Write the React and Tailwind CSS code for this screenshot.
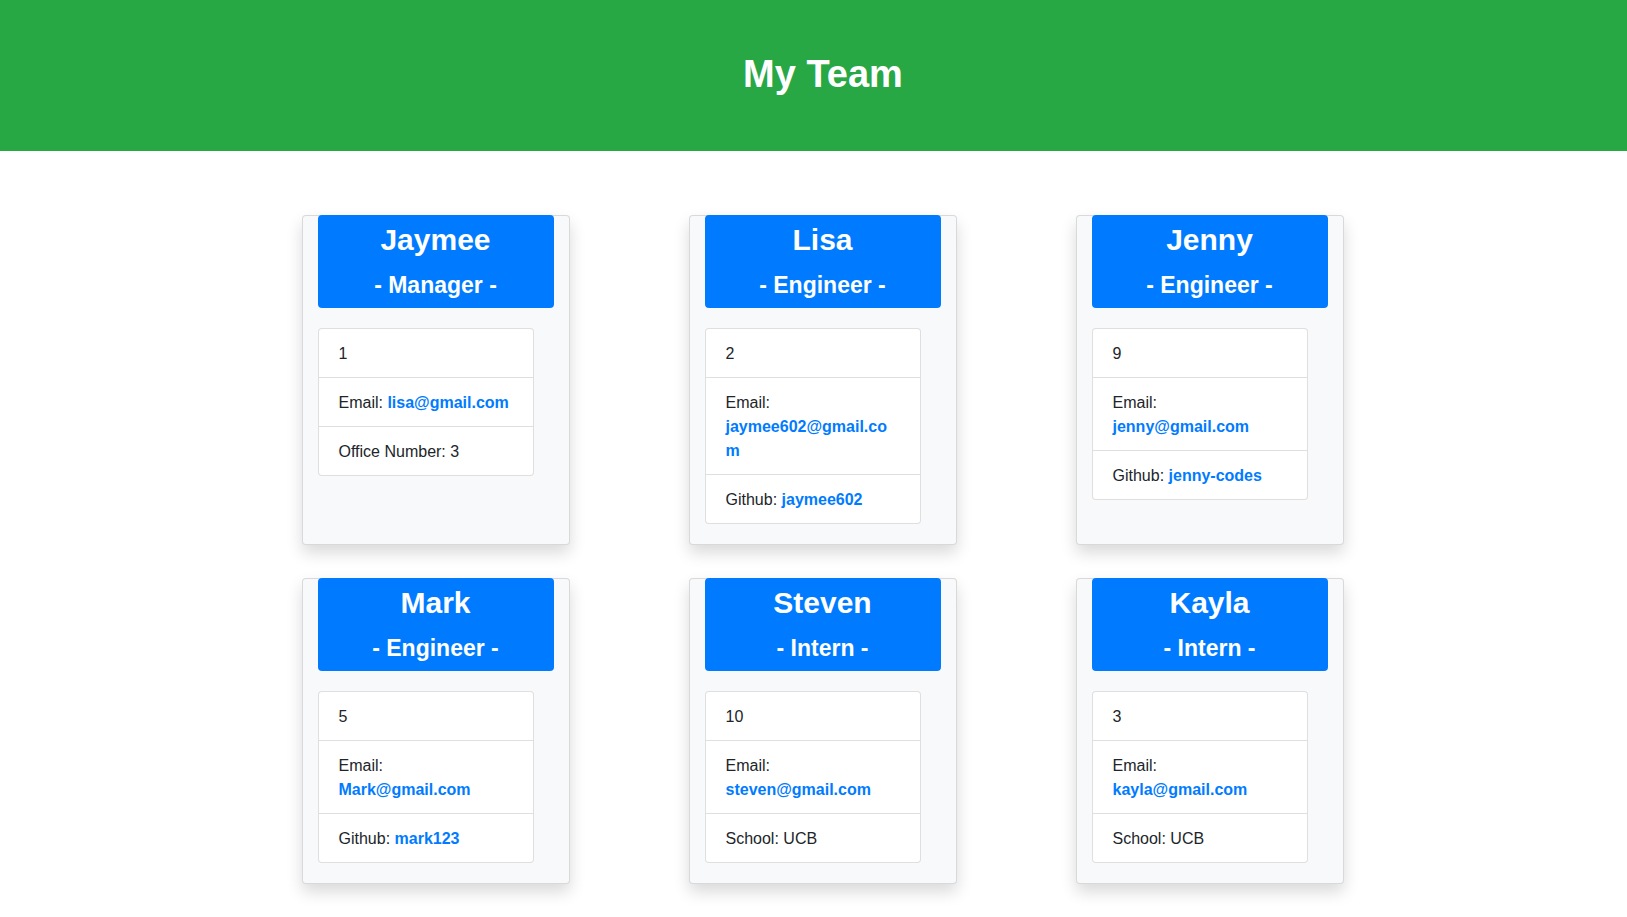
import React from 'react';

const team = [
    { name: 'Jaymee', role: 'Manager', id: 1, email: 'lisa@gmail.com', extra: { label: 'Office Number:', value: '3' } },
    { name: 'Lisa', role: 'Engineer', id: 2, email: 'jaymee602@gmail.com', extra: { label: 'Github:', value: 'jaymee602', link: true } },
    { name: 'Jenny', role: 'Engineer', id: 9, email: 'jenny@gmail.com', extra: { label: 'Github:', value: 'jenny-codes', link: true } },
    { name: 'Mark', role: 'Engineer', id: 5, email: 'Mark@gmail.com', extra: { label: 'Github:', value: 'mark123', link: true } },
    { name: 'Steven', role: 'Intern', id: 10, email: 'steven@gmail.com', extra: { label: 'School:', value: 'UCB' } },
    { name: 'Kayla', role: 'Intern', id: 3, email: 'kayla@gmail.com', extra: { label: 'School:', value: 'UCB' } },
];

const EmployeeCard = ({ member }) => (
    <div className="bg-[#f8f9fa] border border-[rgba(0,0,0,0.125)] rounded-[4px] shadow-[0_8px_16px_rgba(0,0,0,0.15)] px-[15px] pb-[20px] [overflow-wrap:break-word]">
        {/* Card header */}
        <div className="-mt-px bg-[#007bff] rounded-[4px] text-white text-center font-bold">
            <h2 className="pt-[7px] text-[30px] leading-[36px]">{member.name}</h2>
            <h4 className="mt-[13px] pb-[9px] text-[23px] leading-[28px]">- {member.role} -</h4>
        </div>

        {/* Details */}
        <ul className="mt-[20px] w-[216px] bg-white border border-[rgba(0,0,0,0.125)] rounded-[4px] divide-y divide-[rgba(0,0,0,0.125)] text-[16px] leading-[24px] text-[#212529]">
            <li className="px-[20px] pt-[13px] pb-[11px]">{member.id}</li>
            <li className="px-[20px] pt-[13px] pb-[11px]">
                Email: <a href="#" className="font-bold text-[#007bff]">{member.email}</a>
            </li>
            <li className="px-[20px] pt-[13px] pb-[11px]">
                {member.extra.label}{' '}
                {member.extra.link ? (
                    <a href="#" className="font-bold text-[#007bff]">{member.extra.value}</a>
                ) : (
                    member.extra.value
                )}
            </li>
        </ul>
    </div>
);

const App = () => {
    return (
        <div className="min-h-screen bg-white font-['Liberation_Sans',Arial,sans-serif] text-[#212529]">
            <header className="h-[151px] bg-[#28a745] flex items-center justify-center pl-[19px] pb-[4px]">
                <h1 className="text-white text-[38px] leading-[48px] font-bold">My Team</h1>
            </header>

            <main className="pl-[18px] pt-[64px] pb-[32px]">
                <div className="mx-auto w-fit grid grid-cols-[268px_268px_268px] gap-x-[119px] gap-y-[33px]">
                    {team.map((member) => (
                        <EmployeeCard key={member.name} member={member} />
                    ))}
                </div>
            </main>
        </div>
    );
};

export default App;
